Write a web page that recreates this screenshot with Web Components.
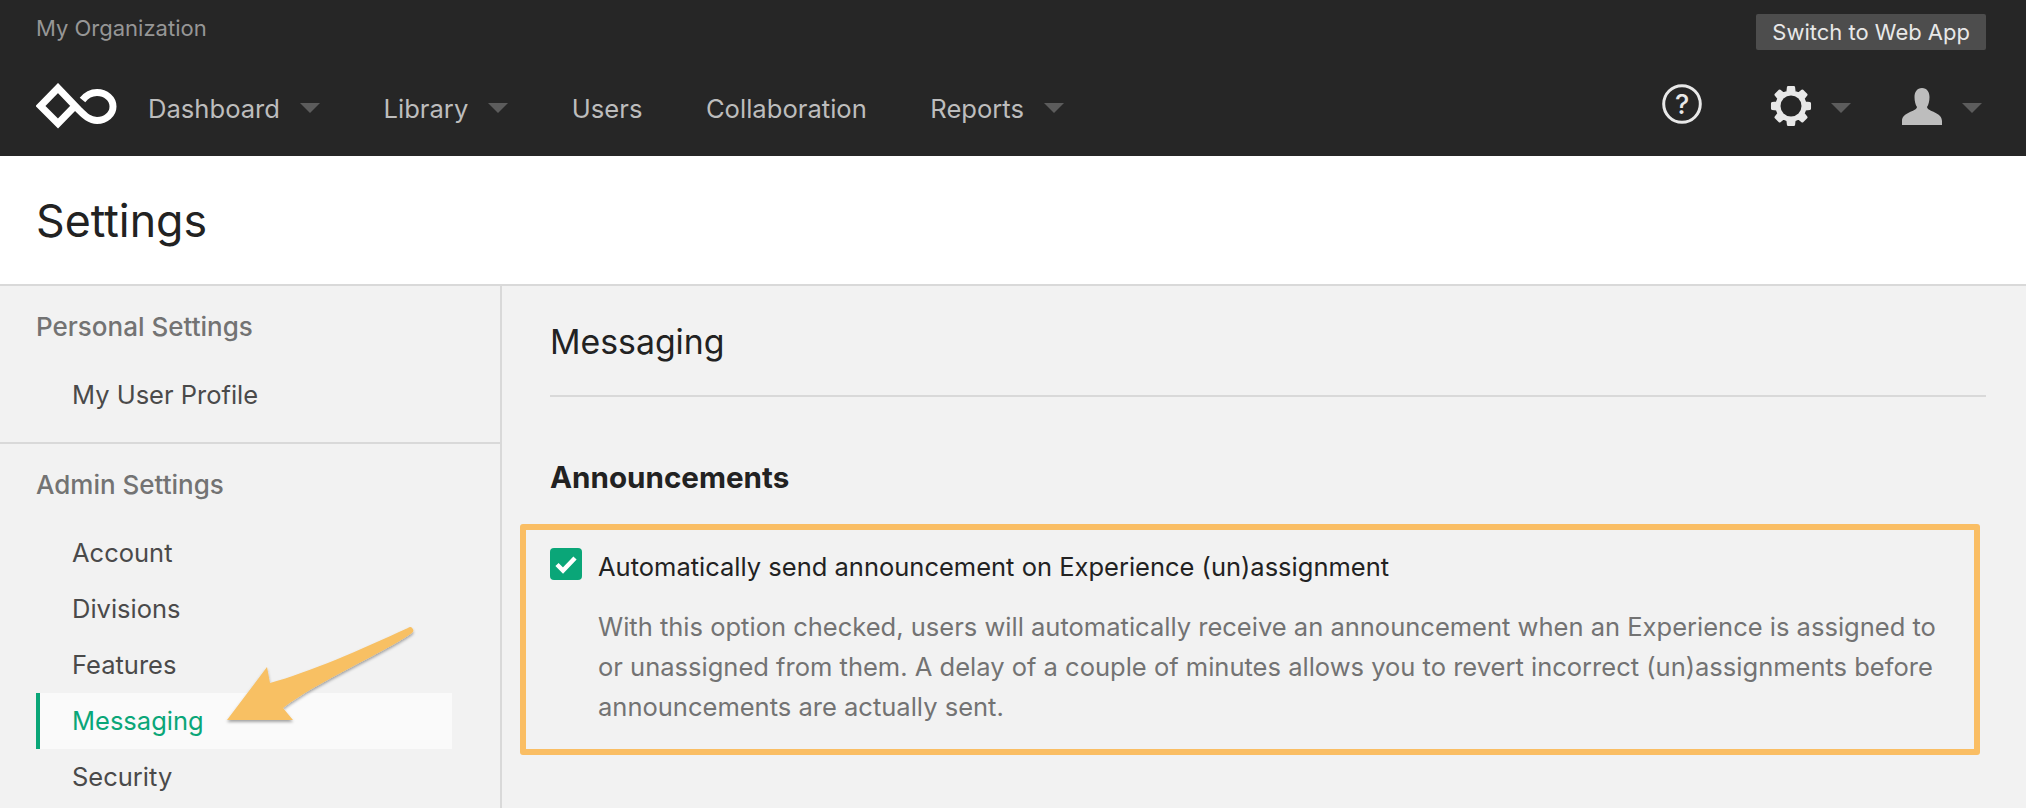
<!doctype html>
<html><head><meta charset="utf-8"><style>
html,body{margin:0;padding:0;height:808px;overflow:hidden;background:#f2f2f2;font-family:Inter,"Liberation Sans",sans-serif}
body{display:flex;flex-direction:column}
</style></head><body>
<app-header></app-header>
<page-title>Settings</page-title>
<div style="display:flex;flex:1;min-height:0">
<side-bar>
 <side-group title="Personal Settings"><side-item>My User Profile</side-item></side-group>
 <side-group title="Admin Settings" last><side-item>Account</side-item><side-item>Divisions</side-item><side-item>Features</side-item><side-item active>Messaging</side-item><side-item>Security</side-item></side-group>
</side-bar>
<main-panel></main-panel>
</div>
<call-arrow></call-arrow>
<script>
function def(name,html){customElements.define(name,class extends HTMLElement{connectedCallback(){if(this.shadowRoot)return;const r=this.attachShadow({mode:'open'});r.innerHTML=typeof html==='function'?html(this):html;}})}
const caret=`<svg width="20" height="10" viewBox="0 0 20 10" style="display:block"><path d="M0 0h20L10 10z" fill="#5c5c5c"/></svg>`;
function gear(){let d='';const n=8,cx=21,cy=21;const pts=[];for(let i=0;i<n;i++){const a=i*Math.PI*2/n-Math.PI/2;const w=Math.PI/n;
 const p=(r,t)=>[(cx+r*Math.cos(t)).toFixed(2),(cy+r*Math.sin(t)).toFixed(2)].join(' ');
 pts.push(p(14.5,a-w*.6),p(19,a-w*.38),p(19,a+w*.38),p(14.5,a+w*.6));}
 d='M'+pts.join('L')+'z';
 return `<svg width="42" height="42" viewBox="0 0 42 42"><path fill="#e8e8e8" stroke="#e8e8e8" stroke-width="2.500" stroke-linejoin="round" d="${d}"/><circle cx="21" cy="21" r="10.500" fill="#262626"/></svg>`}
def('nav-link',h=>`<style>:host{display:flex;align-items:center;gap:20px;color:#bdbdbd;font-size:25.600px;line-height:30px}span{display:block;margin-top:-2px}</style><slot></slot>${h.hasAttribute('caret')?`<span>${caret}</span>`:''}`);
def('app-header',()=>`<style>:host{display:block;height:156px;background:#262626;box-sizing:border-box;flex:none}
.top{display:flex;justify-content:space-between;height:76px;padding:0 40px 0 36px}
.org{font-size:22px;color:#969696;line-height:26px;padding-top:15px}
.sw{margin-top:14px;height:36px;background:#4d4d4d;color:#e8e8e8;border-radius:2px;font-size:22px;line-height:37px;padding:0 16px;}
.nav{display:flex;align-items:center;height:60px;padding:0 44px 0 36px}
.links{display:flex;gap:63.500px;margin-left:31px;margin-top:6px;align-items:center;flex:1}
.right{display:flex;align-items:center}
svg{display:block}
.c{margin-top:4px}
</style>
<div class="top"><div class="org">My Organization</div><div class="sw">Switch to Web App</div></div>
<div class="nav">
<svg width="81" height="46" viewBox="0 0 81 46"><path d="M38 24L22 40.500 4.500 23 22 5 43 27C48 32 53 37.500 61 37.500A16 14 0 0 0 61 9.500C54 9.500 50 12.500 46.500 17" fill="none" stroke="#fff" stroke-width="7"/></svg>
<div class="links"><nav-link caret>Dashboard</nav-link><nav-link caret>Library</nav-link><nav-link>Users</nav-link><nav-link>Collaboration</nav-link><nav-link caret>Reports</nav-link></div>
<div class="right">
<svg width="40" height="40" viewBox="0 0 40 40" style="margin-right:68px;margin-bottom:4px"><circle cx="20" cy="20" r="18.300" fill="none" stroke="#e8e8e8" stroke-width="3"/><text x="20" y="29.500" text-anchor="middle" font-size="27" font-weight="500" font-family="Inter" fill="#e8e8e8">?</text></svg>
${gear()}
<span class="c" style="margin-left:19px;margin-right:51px">${caret}</span>
<svg width="40" height="37" viewBox="0 0 40 37"><path fill="#bdbdbd" d="M20 0c5 0 7.500 4 7.500 9 0 4-1 8-2.500 10 1 5 15 5 15 14v4H0v-4c0-9 14-9 15-14-1.500-2-2.500-6-2.500-10 0-5 2.500-9 7.500-9z"/></svg>
<span class="c" style="margin-left:20px">${caret}</span>
</div></div>`);
def('page-title',`<style>:host{display:block;flex:none;height:130px;background:#fff;border-bottom:2px solid #d9d9d9;box-sizing:border-box;padding:0 36px;font-size:44.700px;line-height:130px;color:#222}</style><slot></slot>`);
def('side-bar',`<style>:host{display:block;width:502px;flex:none;box-sizing:border-box;border-right:2px solid #d9d9d9;height:100%;overflow:hidden}</style><slot></slot>`);
def('side-group',h=>`<style>:host{display:block;padding:19px 0 19px;border-bottom:2px solid #d9d9d9}:host([last]){border-bottom:0}
.t{font-size:26px;line-height:44px;color:#737373;padding-left:36px;font-weight:500;margin-bottom:18px}</style><div class="t">${h.getAttribute('title')}</div><slot></slot>`);
def('side-item',`<style>:host{display:block;height:56px;line-height:56px;font-size:25.500px;color:#4a4a4a;margin-left:36px;padding-left:36px;width:416px;box-sizing:border-box}
:host([active]){background:#fafafa;color:#0aa678;border-left:4px solid #0aa678;padding-left:32px}</style><slot></slot>`);
def('main-panel',`<style>:host{display:block;flex:1;padding:0 40px 0 48px;color:#222}
h2{margin:0;height:109px;line-height:112px;font-size:33.800px;font-weight:400;border-bottom:2px solid #d9d9d9}
h3{margin:0;padding-top:60px;font-size:29.600px;line-height:40px;font-weight:700}
.box{display:flex;gap:16px;margin:27px 6px 0 -30px;border:6px solid #fabe64;border-radius:3px;height:231px;box-sizing:border-box;padding:18px 24px}
.cb{flex:none;width:32px;height:32px;background:#0aa678;border-radius:4px;display:block}
.l{font-size:25.500px;line-height:36px;color:#222;margin-top:1px}
.d{font-size:25.520px;line-height:40px;color:#737373;margin-top:22px}
</style><h2>Messaging</h2><h3>Announcements</h3>
<div class="box"><svg class="cb" viewBox="0 0 32 32"><path d="M7 16.500l6 6L25 10" fill="none" stroke="#fff" stroke-width="4.500"/></svg><div><div class="l">Automatically send announcement on Experience (un)assignment</div><div class="d">With this option checked, users will automatically receive an announcement when an Experience is assigned to or unassigned from them. A delay of a couple of minutes allows you to revert incorrect (un)assignments before announcements are actually sent.</div></div></div>`);
def('call-arrow',`<style>:host{display:block;position:absolute;left:0;top:0;pointer-events:none}svg{position:absolute;left:0;top:0;overflow:visible}</style><svg width="500" height="808"><defs><filter id="s" x="-20%" y="-20%" width="140%" height="140%"><feDropShadow dx="0" dy="2" stdDeviation="1.500" flood-color="#000" flood-opacity=".35"/></filter></defs><path filter="url(#s)" fill="#f8c063" d="M227 720L267 667 270 683C310 672 360 650 408 628a3 3 0 0 1 4 5C380 655 320 680 283 708L293 720z"/></svg>`);
</script>
</body></html>
